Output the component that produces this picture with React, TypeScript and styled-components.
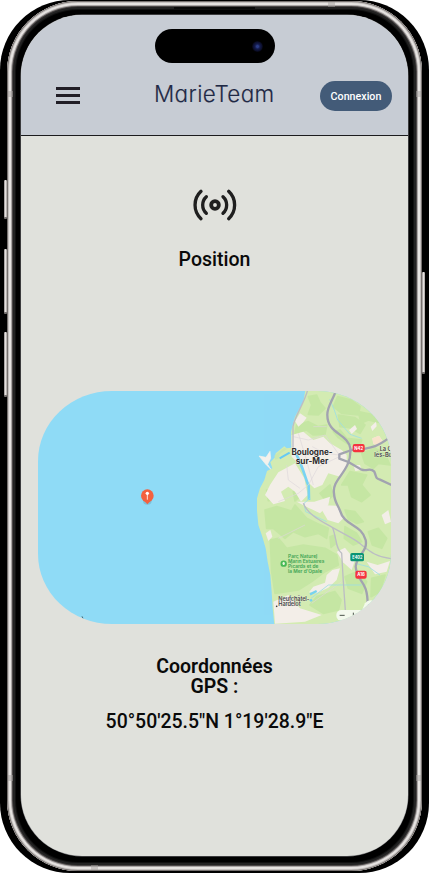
import React from "react";
import styled, { createGlobalStyle } from "styled-components";

const GlobalStyle = createGlobalStyle`
  *, *::before, *::after { box-sizing: border-box; }
  body { margin: 0; background: #fff; font-family: Roboto, "Liberation Sans", sans-serif; overflow: hidden; }
`;

const Phone = styled.div`
  position: relative;
  width: 429px;
  height: 873px;
  padding: 1px 7px 2px;
  border-radius: 70px;
  background: #000;
`;

const MetalRing = styled.div`
  width: 415px;
  height: 870px;
  padding: 14px 14px 15px;
  border-radius: 71px;
  background: #000;
  box-shadow:
    inset 0 0 0 1px #76716f,
    inset 0 0 0 2px #c4c0be,
    inset 0 0 0 4px #e6e3e1,
    inset 0 0 0 5px #a9a5a4,
    inset 0 0 0 6px #4a4646,
    inset 0 0 0 8px #222,
    inset 0 0 0 9px #101010;
`;

const SideButton = styled.span<{ $side: "left" | "right"; $top: number; $height: number }>`
  position: absolute;
  ${(p) => (p.$side === "left" ? "left: 4px;" : "right: 4px;")}
  top: ${(p) => p.$top}px;
  width: 3px;
  height: ${(p) => p.$height}px;
  border-radius: 1px;
  background: linear-gradient(90deg, #918c8b, #e5e1df 50%, #a09b99);
  border-bottom: 2px solid #797473;
`;

const AntennaBand = styled.span<{ $x: number; $y: number; $vertical?: boolean }>`
  position: absolute;
  left: ${(p) => p.$x}px;
  top: ${(p) => p.$y}px;
  width: ${(p) => (p.$vertical ? 5 : 7)}px;
  height: ${(p) => (p.$vertical ? 6 : 5)}px;
  background: rgba(165, 162, 160, 0.5);
`;

const Speaker = styled.span`
  position: absolute;
  left: 174px;
  top: 7px;
  width: 81px;
  height: 2px;
  background: #0a0a0a;
`;

const Screen = styled.div`
  display: flex;
  flex-direction: column;
  width: 387px;
  height: 841px;
  border-radius: 61px;
  overflow: hidden;
  background: #e0e1dc;
  box-shadow: 0 0 0 0.5px #77777a;
`;

const Header = styled.header`
  display: flex;
  flex-direction: column;
  align-items: center;
  height: 121px;
  flex: none;
  padding-top: 14px;
  background: #c7ccd4;
  border-bottom: 1px solid #1c1c1e;
`;

const Island = styled.div`
  display: flex;
  align-items: center;
  justify-content: flex-end;
  width: 120px;
  height: 34px;
  padding-right: 12px;
  border-radius: 17px;
  background: #000;
`;

const Camera = styled.span`
  width: 11px;
  height: 11px;
  border-radius: 50%;
  background: radial-gradient(circle, #2b3c85 0 1px, #141b4d 2.5px, #0b0e2a 4.5px, #04040c 5.5px);
`;

const NavBar = styled.nav`
  display: grid;
  grid-template-columns: 72px 1fr 72px;
  align-items: center;
  width: 100%;
  height: 30px;
  margin-top: 18px;
  padding: 0 16px 0 33px;
`;

const MenuButton = styled.button`
  display: flex;
  flex-direction: column;
  gap: 4px;
  width: 24px;
  margin: 0 0 1px 2px;
  padding: 0;
  border: 0;
  background: none;
`;

const MenuLine = styled.span`
  height: 2.7px;
  background: #211e26;
`;

const Brand = styled.h1`
  margin: -4px 0 0 28px;
  font: 300 22.5px/30px Inter, Lato, sans-serif;
  font-feature-settings: "cv11";
  letter-spacing: 0.35px;
  white-space: nowrap;
  color: #1f2945;
  -webkit-text-stroke: 0.15px #1f2945;
`;

const LoginButton = styled.button`
  width: 72px;
  height: 30px;
  padding: 1px 0 0;
  border: 0;
  border-radius: 15px;
  background: #435b78;
  color: #fff;
  font: 500 10.7px/29px Roboto, sans-serif;
`;

const Content = styled.main`
  display: flex;
  flex-direction: column;
  align-items: center;
  padding-top: 50px;
  color: #0a0a0a;
`;

const RadioIcon = styled.svg`
  display: block;
  width: 48px;
  height: 38px;
`;

const SectionTitle = styled.h2`
  margin: 26px 0 0;
  font: 500 19.5px/20px Roboto, sans-serif;
`;

const MapCard = styled.figure`
  width: 353px;
  height: 233px;
  margin: 121px 0 0;
  border-radius: 74px / 70px;
  overflow: hidden;
  background: #8fdbf6;
`;

const MapDrawing = styled.svg`
  display: block;
  width: 100%;
  height: 100%;
`;

const CoordinatesTitle = styled.h2`
  width: 150px;
  margin: 33px 0 0;
  font: 600 19.5px/20px Roboto, sans-serif;
  text-align: center;
`;

const Coordinates = styled.p`
  margin: 15px 0 0;
  font: 500 19.45px/20px Roboto, sans-serif;
  white-space: nowrap;
`;

const COAST =
  "M182 10 L175 50 L150 95 L138 140 L139 188 L125 190 L118 184 L92 205 L90 217 L76 232 L82 250 L66 258 L58 285 L45 310 L36 340 L36 378 L40 420 L52 455 L62 490 L68 530 L76 570 L80 620 L83 670 L88 720 H460 V10 Z";

const URBAN = [
  "M140 150 L175 140 L205 165 L235 155 L255 175 L290 195 L305 210 L305 240 L285 275 L250 265 L232 300 L208 310 L188 290 L170 245 L140 215Z",
  "M100 262 L150 235 L178 280 L188 330 L168 350 L150 320 L130 305 L108 320 L120 348 L85 358 L60 330 L75 300Z",
  "M165 85 L185 98 L175 112 L160 125 L150 108Z",
  "M155 350 L208 350 L255 335 L250 360 L225 385 L190 368Z",
  "M222 360 L275 362 L295 400 L280 415 L248 405Z",
  "M240 593 L245 570 L262 555 L285 550 L275 585 L250 608 L215 625 L192 622 L205 605Z",
  "M85 650 L130 630 L165 670 L230 690 L180 710 L90 716Z",
  "M275 500 L300 488 L330 525 L320 555 L294 532Z",
  "M365 530 L398 540 L435 528 L425 560 L390 568Z",
  "M382 160 L402 152 L413 168 L400 182 L385 176Z",
  "M312 135 L330 120 L336 132 L320 147Z",
  "M377 125 L393 110 L395 124 L382 138Z",
  "M325 240 L345 240 L350 255 L331 258Z",
  "M62 445 L76 435 L82 455 L70 468Z",
  "M410 390 L430 375 L438 410 L420 418Z",
];

const WOODS = [
  "M190 35 L215 30 L225 53 L240 70 L220 90 L190 88 L200 60Z",
  "M155 120 L190 110 L220 125 L245 120 L240 148 L205 150 L185 135 L150 145Z",
  "M278 35 L318 45 L345 65 L340 90 L290 85 L265 65Z",
  "M280 90 L330 98 L360 120 L345 145 L315 128 L285 125Z",
  "M340 80 L390 90 L400 112 L370 105 L348 115Z",
  "M265 140 L285 135 L305 160 L350 165 L345 180 L310 178 L280 158Z",
  "M350 205 L390 190 L420 205 L435 240 L400 235 L385 250 L360 235Z",
  "M315 260 L365 270 L350 300 L375 330 L350 350 L320 335 L310 300 L290 300Z",
  "M225 325 L255 300 L265 330 L245 350Z",
  "M100 275 L120 265 L140 280 L125 300 L112 290Z",
  "M65 315 L95 320 L98 343 L70 347Z",
  "M145 320 L163 308 L170 330 L150 348Z",
  "M60 375 L95 365 L140 378 L150 360 L185 400 L215 415 L250 430 L245 460 L220 445 L180 455 L145 440 L120 460 L85 430 L65 430Z",
  "M76 465 L100 460 L125 490 L175 480 L240 490 L275 510 L280 540 L240 560 L200 590 L160 615 L90 625 L80 560Z",
  "M255 455 L268 450 L273 475 L258 487Z",
  "M300 425 L335 445 L350 470 L325 480 L298 460Z",
  "M370 440 L400 430 L425 460 L410 490 L382 480Z",
  "M300 375 L330 380 L355 410 L335 415 L310 402Z",
  "M300 575 L335 560 L365 590 L350 625 L310 610Z",
  "M215 635 L270 620 L288 645 L280 675 L235 685 L195 660Z",
  "M380 580 L420 570 L405 620 L378 635Z",
];

const MAJOR_ROADS = [
  "M274 14 C264 45 246 65 247 90 C247 148 309 145 316 190 C321 260 260 280 267 325 C268 350 279 361 285 377 C297 423 350 417 362 465 C369 500 335 510 332 545 C336 595 368 580 368 660",
  "M442 152 C405 178 395 190 320 195 L283 208 L283 221 L310 231 L350 254 C367 260 375 246 388 260 C395 275 390 280 405 284 L440 300",
];

const MINOR_ROADS = [
  "M188 15 C178 55 148 95 144 125 L144 200",
  "M175 355 C188 390 235 411 263 428 L318 458 C360 480 375 515 440 521",
  "M263 428 C276 463 271 490 290 505 L295 590 L302 690",
];

const FAINT_ROADS = [
  "M145 155 L190 165 L240 150 L283 210 L240 205 L202 185",
  "M100 350 L160 325 L190 300 L220 245 L283 215",
  "M125 240 L130 285 L165 310 M160 145 L180 210 L205 300",
  "M205 125 L245 125 M100 460 L180 420 M200 655 L290 590",
];

const STREAMS = [
  "M254 43 L268 75 L278 105 L315 148 L350 160",
  "M195 340 L177 355 L182 380 L245 410",
  "M330 535 L370 545 L405 570 M198 640 L250 600 L350 600",
];

const MapIllustration = () => (
  <MapDrawing viewBox="-621 18 1059 699" preserveAspectRatio="none" role="img">
    <path d={COAST} fill="#d3ebb2" />
    <g fill="#bde49c" opacity=".65" stroke="#bde49c" strokeWidth="5" strokeLinejoin="round">
      {WOODS.map((d) => <path key={d} d={d} />)}
    </g>
    <g fill="#f3eee8">
      {URBAN.map((d) => <path key={d} d={d} />)}
    </g>
    <path d="M382 160 L402 152 L413 168 L400 182 L385 176Z" fill="#f8e3cb" />
    <path d="M42 213 L63 217 L75 199 L77 220 L68 238 L77 252 L64 240Z" fill="#f4f1ec" stroke="#f4f1ec" strokeWidth="2" />
    <path d="M88 212 L118 188 L126 192 L105 207 L100 221 L91 224Z" fill="#cbe8ad" />
    <path d="M104 220 L134 203" stroke="#65c9f4" strokeWidth="6" />
    <path d="M152 204 C172 240 181 280 191 303 L192 345" fill="none" stroke="#79d3f3" strokeWidth="8" />
    <path d="M195 628 L215 618" stroke="#78d2ef" strokeWidth="7" />
    <circle cx="198" cy="646" r="4" fill="#78d2ef" />
    <g fill="none" stroke="#ded8db" strokeWidth="2">
      {FAINT_ROADS.map((d) => <path key={d} d={d} />)}
    </g>
    <g fill="none" stroke="#9edfe3" strokeWidth="2.5">
      {STREAMS.map((d) => <path key={d} d={d} />)}
    </g>
    <g fill="none" stroke="#bcbdc4" strokeWidth="4">
      {MINOR_ROADS.map((d) => <path key={d} d={d} />)}
    </g>
    <g fill="none" stroke="#a2a3b0" strokeWidth="7" strokeLinejoin="round">
      {MAJOR_ROADS.map((d) => <path key={d} d={d} />)}
    </g>
    <g fontFamily="Inter, sans-serif" fontWeight="700" fontSize="25" textAnchor="middle" fill="#2f2e2e" stroke="#f6f3ee" strokeWidth="2" paintOrder="stroke">
      <text x="201" y="210" textLength="123" lengthAdjust="spacingAndGlyphs">Boulogne-</text>
      <text x="201" y="238" textLength="98" lengthAdjust="spacingAndGlyphs">sur-Mer</text>
    </g>
    <g fontFamily="Inter, sans-serif" fontWeight="600" fontSize="17" fill="#454545" stroke="#f6f3ee" strokeWidth="1" paintOrder="stroke">
      <text x="404" y="197">La C</text>
      <text x="388" y="215">lès-Bo</text>
      <text x="100" y="648" textLength="93">Neufchâtel-</text>
      <text x="100" y="664" textLength="67">Hardelot</text>
    </g>
    <circle cx="95" cy="664" r="2.5" fill="#333" />
    <g fontFamily="Inter, sans-serif" fontWeight="600" fontSize="14.5" fill="#40a454">
      <text x="129" y="519" textLength="88">Parc Naturel</text>
      <text x="129" y="534" textLength="109">Marin Estuaires</text>
      <text x="129" y="549" textLength="91">Picards et de</text>
      <text x="129" y="564" textLength="102">la Mer d'Opale</text>
    </g>
    <circle cx="116" cy="536" r="9.5" fill="#48b956" />
    <path d="M112 534 L116 530 L120 534 L118 540 H114Z" fill="#e9f8df" />
    <rect x="323" y="177" width="36" height="25" rx="6" fill="#f5333f" />
    <rect x="316" y="504" width="41" height="25" rx="5" fill="#0b9474" />
    <rect x="331" y="557" width="34" height="24" rx="6" fill="#f5333f" />
    <g fontFamily="Inter, sans-serif" fontWeight="700" fontSize="13" fill="#fff" textAnchor="middle">
      <text x="341" y="194">N42</text>
      <text x="337" y="521" textLength="30" lengthAdjust="spacingAndGlyphs">E402</text>
      <text x="348" y="574">A16</text>
    </g>
    <rect x="274" y="675" width="91" height="32" rx="15" fill="#f3f9ed" />
    <path d="M284 691 H299 M325 683 V691" stroke="#4a534a" strokeWidth="3" />
    <path d="M360 655 Q372 640 390 650 V690 H345Z" fill="#f3f9ed" />
    <path d="M-489 694 L-486 700" stroke="#456879" strokeWidth="3" />
    <ellipse cx="-293" cy="348" rx="13" ry="11" fill="#6fafc6" opacity=".6" />
    <circle cx="-293" cy="332" r="19" fill="#f3613f" />
    <path d="M-304 346 L-293 358 L-281 346Z" fill="#f3613f" />
    <circle cx="-293" cy="325" r="5" fill="#fff" />
    <path d="M-293 327 V344" stroke="#fff" strokeWidth="2.5" />
  </MapDrawing>
);

export default function App() {
  return (
    <>
      <GlobalStyle />
      <Phone>
        <MetalRing>
          <Screen>
            <Header>
              <Island><Camera /></Island>
              <NavBar>
                <MenuButton aria-label="Menu">
                  <MenuLine /><MenuLine /><MenuLine />
                </MenuButton>
                <Brand>MarieTeam</Brand>
                <LoginButton>Connexion</LoginButton>
              </NavBar>
            </Header>
            <Content>
              <RadioIcon viewBox="62 33 144 114" fill="none" stroke="#1f1f1f" strokeLinecap="round" strokeWidth="10">
                <circle cx="134" cy="90" r="11.5" strokeWidth="11.5" />
                <path d="M108 65 A34 34 0 0 0 108 115 M158 65 A34 34 0 0 1 158 115" />
                <path d="M92 49 A56 56 0 0 0 92 131 M175 49 A56 56 0 0 1 175 131" />
              </RadioIcon>
              <SectionTitle>Position</SectionTitle>
              <MapCard><MapIllustration /></MapCard>
              <CoordinatesTitle>Coordonnées GPS :</CoordinatesTitle>
              <Coordinates>50°50'25.5"N 1°19'28.9"E</Coordinates>
            </Content>
          </Screen>
        </MetalRing>
        <SideButton $side="left" $top={180} $height={39} />
        <SideButton $side="left" $top={249} $height={65} />
        <SideButton $side="left" $top={332} $height={65} />
        <SideButton $side="right" $top={272} $height={102} />
        <AntennaBand $vertical $x={8} $y={91} />
        <AntennaBand $vertical $x={416} $y={91} />
        <AntennaBand $vertical $x={8} $y={775} />
        <AntennaBand $vertical $x={416} $y={775} />
        <AntennaBand $x={328} $y={2} />
        <AntennaBand $x={91} $y={865} />
        <Speaker />
      </Phone>
    </>
  );
}
